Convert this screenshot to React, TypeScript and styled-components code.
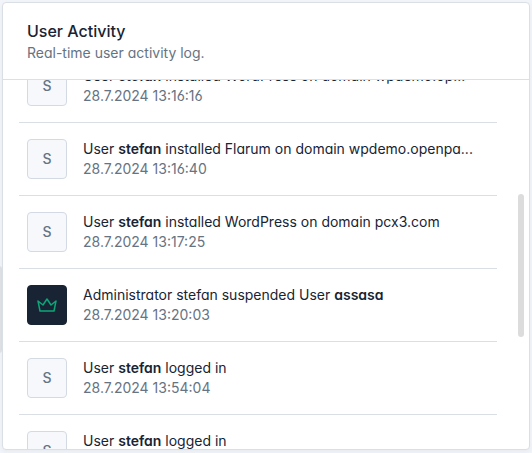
import React from "react";
import styled, { createGlobalStyle, css } from "styled-components";

const GlobalStyle = createGlobalStyle`
  *, *::before, *::after { box-sizing: border-box; }
  html, body { margin: 0; height: 100%; overflow: hidden; }
  body {
    background: #f1f5f9;
    color: #182433;
    font: 400 14px/20px Inter, sans-serif;
    font-feature-settings: "cv03", "cv04", "cv11";
  }
`;

const Page = styled.main`
  position: relative;
  height: 453px;
  padding: 2px;
`;

const OuterScrollThumb = styled.div`
  position: absolute;
  left: -4px;
  top: 266px;
  width: 6px;
  height: 87px;
  border-radius: 3px;
  background: #dfe1e6;
`;

const Card = styled.section`
  position: relative;
  display: flex;
  flex-direction: column;
  height: 448px;
  overflow: hidden;
  background: #fff;
  border: 1px solid #dadfe5;
  border-radius: 4px;
  box-shadow: 0 2px 4px rgba(24, 36, 51, 0.04);
`;

const Header = styled.header`
  flex: none;
  padding: 16px 24px;
  border-bottom: 1px solid #dcdfe3;
`;

const Title = styled.h3`
  margin: 0;
  font-size: 16px;
  line-height: 24px;
  font-weight: 500;
`;

const Muted = styled.div`
  color: #667382;
`;

const ScrollArea = styled.div`
  flex: 1;
  min-height: 0;
  overflow: hidden;
`;

const List = styled.div`
  margin: -30px 32px 0 16px;
`;

const Row = styled.article`
  display: flex;
  gap: 16px;
  height: 73px;
  padding: 16px 8px;
  border-bottom: 1px solid #dadfe5;
`;

const Avatar = styled.div<{ $admin?: boolean }>`
  flex: none;
  display: flex;
  align-items: center;
  justify-content: center;
  width: 40px;
  height: 40px;
  border-radius: 4px;
  font-weight: 500;
  color: #667382;
  background: #f6f8fb;
  border: 1px solid #d3dae3;
  ${(p) =>
    p.$admin &&
    css`
      color: #0ca678;
      background: #182433;
      border-color: #182433;
    `}
`;

const Details = styled.div`
  flex: 1;
  min-width: 0;
`;

const Message = styled.div`
  overflow: hidden;
  white-space: nowrap;
  text-overflow: ellipsis;
`;

const Name = styled.strong`
  font-weight: 600;
`;

const ScrollThumb = styled.div`
  position: absolute;
  top: 191px;
  right: 5px;
  width: 6px;
  height: 143px;
  border-radius: 3px;
  background: #dcdcdd;
`;

const Crown = () => (
  <svg
    width="24"
    height="24"
    viewBox="0 0 24 24"
    fill="none"
    stroke="currentColor"
    strokeWidth="1.5"
    strokeLinecap="round"
    strokeLinejoin="round"
  >
    <path d="M12 6l4 6l5 -4l-2 10h-14l-2 -10l5 4z" />
  </svg>
);

interface Activity {
  admin?: boolean;
  before: string;
  name: string;
  after?: string;
  time: string;
}

const activities: Activity[] = [
  { before: "User ", name: "stefan", after: " installed WordPress on domain wpdemo.op...", time: "28.7.2024 13:16:16" },
  { before: "User ", name: "stefan", after: " installed Flarum on domain wpdemo.openpa...", time: "28.7.2024 13:16:40" },
  { before: "User ", name: "stefan", after: " installed WordPress on domain pcx3.com", time: "28.7.2024 13:17:25" },
  { admin: true, before: "Administrator stefan suspended User ", name: "assasa", time: "28.7.2024 13:20:03" },
  { before: "User ", name: "stefan", after: " logged in", time: "28.7.2024 13:54:04" },
  { before: "User ", name: "stefan", after: " logged in", time: "28.7.2024 13:54:10" },
];

export default function App() {
  return (
    <Page>
      <GlobalStyle />
      <OuterScrollThumb />
      <Card>
        <Header>
          <Title>User Activity</Title>
          <Muted>Real-time user activity log.</Muted>
        </Header>
        <ScrollArea>
          <List>
            {activities.map((a) => (
              <Row key={a.time}>
                <Avatar $admin={a.admin}>{a.admin ? <Crown /> : "S"}</Avatar>
                <Details>
                  <Message>
                    {a.before}
                    <Name>{a.name}</Name>
                    {a.after}
                  </Message>
                  <Muted>{a.time}</Muted>
                </Details>
              </Row>
            ))}
          </List>
        </ScrollArea>
        <ScrollThumb />
      </Card>
    </Page>
  );
}
